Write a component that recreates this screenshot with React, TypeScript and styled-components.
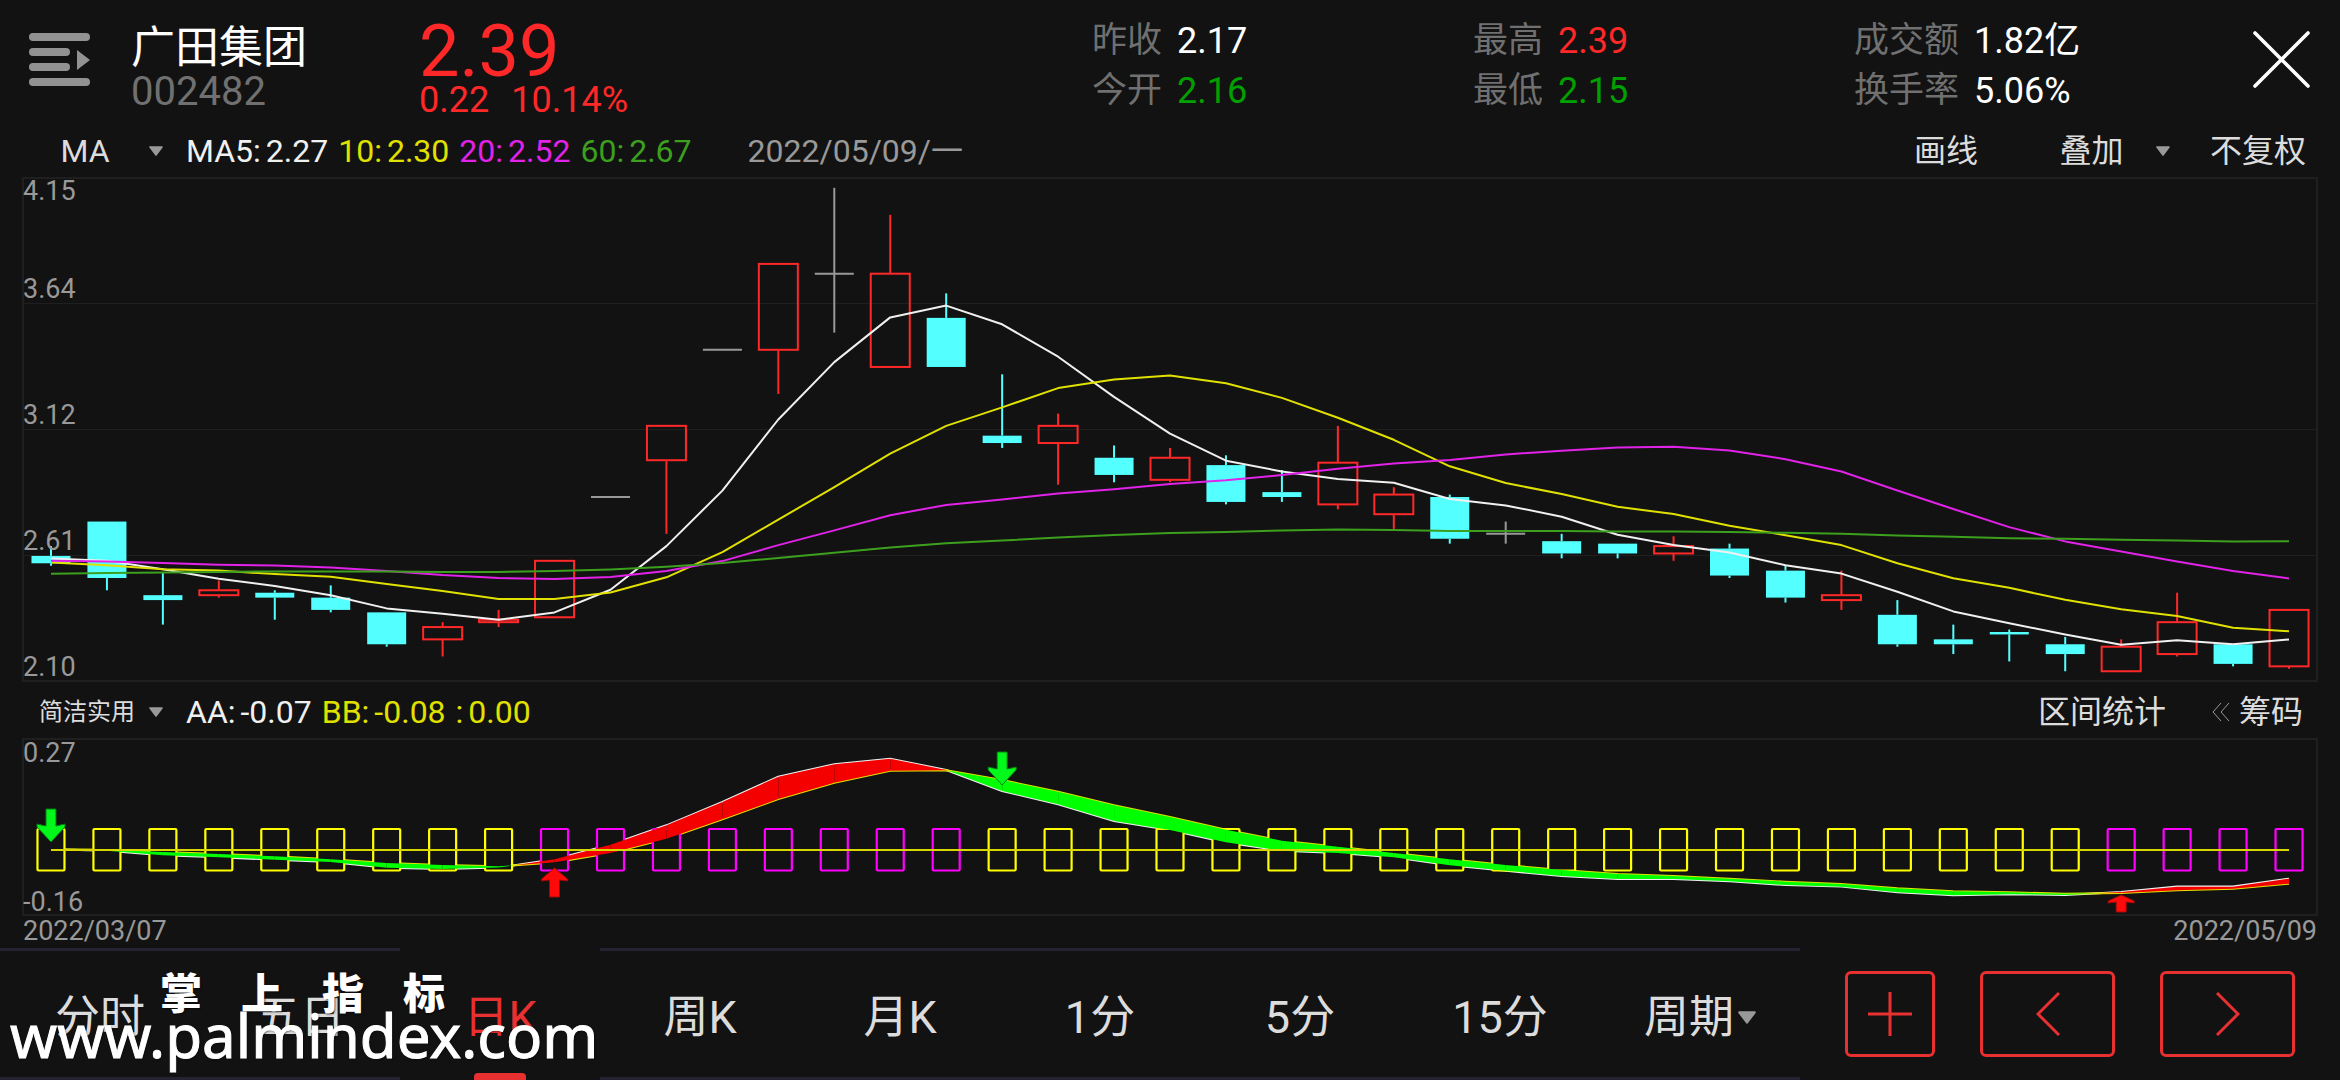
import React from "react";
import styled, { createGlobalStyle } from "styled-components";

const color = {
  bg: "#121212",
  red: "#ff2828",
  accent: "#e83030",
  green: "#00a000",
  cyan: "#54ffff",
  yellow: "#e1e100",
  magenta: "#e122e8",
  maGreen: "#3ca01e",
  light: "#dcdcdc",
  bright: "#f0f0f0",
  grey: "#999999",
  dim: "#707070",
  grid: "#1f1f1f",
  navLine: "#232333",
};

const GlobalStyle = createGlobalStyle`
  *, *::before, *::after { box-sizing: border-box; }
  body { margin: 0; background: ${color.bg}; }
  button, select {
    margin: 0; padding: 0; border: 0; background: none; color: inherit;
    font: inherit; cursor: pointer; appearance: none; border-radius: 0;
  }
  svg { display: block; }
`;

const Page = styled.div`
  position: relative;
  display: flex;
  flex-direction: column;
  min-height: 100vh;
  overflow: hidden;
  background: ${color.bg};
  color: ${color.light};
  font-family: Roboto, "Noto Sans CJK SC", sans-serif;
`;

/* ---------- header ---------- */

const Header = styled.header`
  display: flex;
  align-items: flex-start;
  height: 126px;
  padding: 0 30px 0 29px;
`;

const MenuButton = styled.button`
  margin-top: 33px;
  margin-right: 41px;
`;

const Identity = styled.div`
  width: 288px;
  padding-top: 26px;
  line-height: 44px;
`;

const StockName = styled.h1`
  margin: 0;
  color: #fff;
  font-size: 44px;
  font-weight: 400;
`;

const StockCode = styled.div`
  color: ${color.dim};
  font-size: 40px;
`;

const Quote = styled.div`
  flex: 1;
  padding-top: 20px;
  color: ${color.red};
`;

const LastPrice = styled.div`
  font-size: 72px;
  line-height: 64px;
`;

const Change = styled.div`
  display: flex;
  gap: 22px;
  font-size: 36px;
  line-height: 32px;
`;

const Stats = styled.dl`
  display: grid;
  grid-template-columns: repeat(3, 381px);
  grid-auto-flow: column;
  grid-template-rows: 50px 50px;
  margin: 0;
  padding-top: 16px;
  font-size: 36px;
  line-height: 50px;
`;

const Stat = styled.div`
  display: flex;
  gap: 15px;
`;

const StatLabel = styled.dt`
  color: ${color.dim};
  font-size: 35px;
`;

const StatValue = styled.dd<{ $color: string }>`
  margin: 0;
  color: ${(p) => p.$color};
`;

const CloseButton = styled.button`
  margin: 31px 0 0 18px;
`;

/* ---------- toolbars ---------- */

const Toolbar = styled.div<{ $height: number; $top?: number; $bottom?: number; $end: number }>`
  display: flex;
  align-items: center;
  height: ${(p) => p.$height}px;
  padding: ${(p) => p.$top ?? 0}px ${(p) => p.$end}px ${(p) => p.$bottom ?? 0}px 26px;
  font-size: 32px;
  line-height: 40px;
`;

const Picker = styled.label<{ $gap: number }>`
  display: flex;
  align-items: center;
  gap: ${(p) => p.$gap}px;
`;

const Select = styled.select<{ $size: number; $width?: number }>`
  width: ${(p) => (p.$width ? `${p.$width}px` : "auto")};
  font-size: ${(p) => p.$size}px;
  text-align: center;
  text-align-last: center;
  outline: none;
`;

const Readings = styled.div`
  display: flex;
  gap: 10px;
  margin-left: 23px;
`;

const Reading = styled.span<{ $color: string }>`
  display: flex;
  gap: 5px;
  color: ${(p) => p.$color};
`;

const DateLabel = styled.time`
  margin-left: 56px;
  color: ${color.grey};
`;

const Tools = styled.div`
  display: flex;
  align-items: center;
  margin-left: auto;
`;

const ToolButton = styled.button<{ $space?: number }>`
  display: flex;
  align-items: center;
  gap: 9px;
  margin-left: ${(p) => p.$space ?? 0}px;
  white-space: nowrap;
`;

const OverlaySlot = styled.div`
  margin: 0 40px 0 81px;
`;

/* ---------- charts ---------- */

const ChartFrame = styled.section<{ $height: number }>`
  display: grid;
  height: ${(p) => p.$height}px;
  margin: 0 23px;

  > * {
    grid-area: 1 / 1;
  }
`;

const Plot = styled.svg`
  width: 100%;
  height: 100%;
  overflow: visible;
`;

const Axis = styled.div<{ $bands: number }>`
  display: grid;
  grid-template-rows: repeat(${(p) => p.$bands}, 1fr);
  color: ${color.grey};
  font-size: 27px;
  line-height: 28px;
  pointer-events: none;
`;

const Band = styled.div`
  display: flex;
  flex-direction: column;
  justify-content: flex-end;

  &:first-child {
    justify-content: space-between;
  }
`;

const DateRange = styled.div`
  display: flex;
  justify-content: space-between;
  height: 32px;
  padding: 0 23px;
  color: ${color.grey};
  font-size: 27px;
  line-height: 30px;
`;

/* ---------- bottom navigation ---------- */

const Footer = styled.footer`
  display: flex;
  height: 132px;
`;

const Tabs = styled.nav`
  display: grid;
  flex: 1;
  grid-template-columns: repeat(9, 1fr);
`;

const Tab = styled.div<{ $active?: boolean }>`
  position: relative;
  display: flex;
  align-items: center;
  justify-content: center;
  padding-top: 7px;
  border: solid ${(p) => (p.$active ? "transparent" : color.navLine)};
  border-width: 3px 0;
  color: ${(p) => (p.$active ? color.accent : color.light)};
  font-size: 45px;
  line-height: 56px;
`;

const ActiveMark = styled.span`
  position: absolute;
  bottom: -3px;
  left: calc(50% - 26px);
  width: 52px;
  height: 7px;
  border-radius: 4px 4px 0 0;
  background: ${color.accent};
`;

const Actions = styled.div`
  display: flex;
  gap: 45px;
  padding: 23px 45px 0;
`;

const ActionButton = styled.button<{ $width: number }>`
  display: flex;
  align-items: center;
  justify-content: center;
  width: ${(p) => p.$width}px;
  height: 86px;
  border: 3px solid ${color.accent};
  border-radius: 6px;
`;

const Watermark = styled.div`
  position: absolute;
  bottom: 27px;
  left: 10px;
  color: #fff;
  pointer-events: none;
  text-shadow: 1px 1px 2px rgba(0, 0, 0, 0.6);
`;

const WatermarkName = styled.div`
  display: flex;
  gap: 39px;
  padding-left: 150px;
  font-size: 42px;
  font-weight: 900;
  line-height: 44px;
`;

const WatermarkSite = styled.div`
  font-family: "Noto Sans", sans-serif;
  font-size: 60px;
  line-height: 36px;
  -webkit-text-stroke: 1px #fff;
`;

/* ---------- data ---------- */

type Candle = [open: number, close: number, high: number, low: number];

const candles: Candle[] = [
  [2.61, 2.58, 2.65, 2.57], [2.75, 2.52, 2.75, 2.47], [2.45, 2.43, 2.54, 2.33],
  [2.45, 2.47, 2.51, 2.44], [2.46, 2.44, 2.47, 2.35], [2.44, 2.39, 2.49, 2.38],
  [2.38, 2.25, 2.38, 2.24], [2.27, 2.32, 2.34, 2.2], [2.34, 2.35, 2.39, 2.32],
  [2.36, 2.59, 2.59, 2.36], [2.85, 2.85, 2.85, 2.85], [3.0, 3.14, 3.14, 2.7],
  [3.45, 3.45, 3.45, 3.45], [3.45, 3.8, 3.8, 3.27], [3.76, 3.76, 4.11, 3.52],
  [3.38, 3.76, 4.0, 3.38], [3.58, 3.38, 3.68, 3.38], [3.1, 3.07, 3.35, 3.05],
  [3.07, 3.14, 3.19, 2.9], [3.01, 2.94, 3.06, 2.91], [2.92, 3.01, 3.05, 2.91],
  [2.98, 2.83, 3.02, 2.82], [2.87, 2.85, 2.96, 2.83], [2.82, 2.99, 3.14, 2.8],
  [2.78, 2.86, 2.89, 2.72], [2.85, 2.68, 2.86, 2.66], [2.7, 2.7, 2.75, 2.66],
  [2.67, 2.62, 2.7, 2.6], [2.66, 2.62, 2.66, 2.6], [2.62, 2.65, 2.69, 2.59],
  [2.64, 2.53, 2.66, 2.52], [2.55, 2.44, 2.57, 2.42], [2.43, 2.45, 2.55, 2.39],
  [2.37, 2.25, 2.43, 2.24], [2.27, 2.25, 2.33, 2.21], [2.3, 2.29, 2.31, 2.18],
  [2.25, 2.21, 2.28, 2.14], [2.14, 2.24, 2.27, 2.14], [2.21, 2.34, 2.46, 2.2],
  [2.25, 2.17, 2.25, 2.16], [2.16, 2.39, 2.39, 2.15],
];

/* Averages whose window starts before the first visible day are given as a lead-in. */
const movingAverage = (span: number, leadIn: number[]) =>
  candles.map((_, i) =>
    i < leadIn.length
      ? leadIn[i]
      : candles.slice(i - span + 1, i + 1).reduce((sum, c) => sum + c[1], 0) / span
  );

const ma5 = movingAverage(5, [2.6, 2.59, 2.556, 2.517]);
const ma10 = movingAverage(10, [2.583, 2.572, 2.556, 2.55, 2.536, 2.525, 2.495, 2.467, 2.434]);
const ma20 = movingAverage(20, [
  2.59, 2.587, 2.581, 2.574, 2.571, 2.563, 2.549, 2.532, 2.52, 2.516, 2.524, 2.548, 2.589, 2.654,
  2.714, 2.776, 2.818, 2.84, 2.864,
]);
const ma60 = [
  2.537, 2.54, 2.543, 2.545, 2.547, 2.547, 2.546, 2.545, 2.545, 2.548, 2.555, 2.566, 2.581, 2.602,
  2.623, 2.644, 2.662, 2.673, 2.685, 2.695, 2.703, 2.708, 2.714, 2.718, 2.715, 2.712, 2.711, 2.711,
  2.71, 2.71, 2.708, 2.704, 2.7, 2.693, 2.688, 2.682, 2.68, 2.676, 2.673, 2.669, 2.67,
];

/* Indicator values in ten-thousandths. */
const fast = [
  16, -16, -130, -179, -236, -293, -432, -465, -430, -228, 130, 603, 1174, 1793, 2095, 2233, 1956,
  1443, 1117, 709, 489, 187, -16, -73, -179, -375, -505, -636, -709, -709, -766, -856, -896, -1035,
  -1108, -1084, -1100, -1027, -896, -896, -701,
];
const slow = [
  16, 8, -49, -98, -155, -228, -318, -367, -399, -302, -73, 277, 750, 1247, 1646, 1940, 1948, 1711,
  1426, 1092, 807, 497, 228, 81, -73, -228, -367, -489, -587, -636, -701, -774, -831, -937, -1011,
  -1035, -1068, -1051, -986, -945, -823,
];

const isRising = (i: number) => (i >= 9 && i <= 16) || i >= 37;

/* ---------- plotting ---------- */

const W = 2294;
const PRICE_H = 504;
const IND_H = 177;
const STEP = W / candles.length;

const xAt = (i: number) => (i + 0.5) * STEP;
const priceY = (p: number) => 1 + (4.15 - p) * 245.4;
const indY = (v: number) => 111 - (v / 10000) * 409;

const toPoints = (values: number[], y: (v: number) => number) =>
  values.map((v, i) => `${xAt(i).toFixed(1)},${y(v).toFixed(1)}`).join(" ");

function CandleMark({ index, candle }: { index: number; candle: Candle }) {
  const [open, close, high, low] = candle;
  const x = xAt(index);
  const top = priceY(Math.max(open, close));
  const bottom = priceY(Math.min(open, close));
  const flat = open === close;
  const stroke = flat ? color.grey : close > open ? color.red : color.cyan;
  return (
    <g stroke={stroke} strokeWidth={2} fill="none">
      {priceY(high) < top && <line x1={x} x2={x} y1={priceY(high)} y2={top} />}
      {priceY(low) > bottom && <line x1={x} x2={x} y1={bottom} y2={priceY(low)} />}
      {flat && <line x1={x - 19.5} x2={x + 19.5} y1={top} y2={top} />}
      {close > open && <rect x={x - 19.5} y={top} width={39} height={bottom - top} />}
      {close < open && (
        <rect
          x={x - 19.5}
          y={top}
          width={39}
          height={bottom - top}
          fill={color.cyan}
          stroke="none"
        />
      )}
    </g>
  );
}

function PricePlot() {
  return (
    <Plot viewBox={`0 0 ${W} ${PRICE_H}`} preserveAspectRatio="none" role="img" aria-label="日K">
      <g stroke={color.grid} fill="none">
        <rect x={0} y={1} width={W} height={503} strokeWidth={2} />
        {[1, 2, 3].map((n) => (
          <line key={n} x1={0} x2={W} y1={0.5 + n * 126} y2={0.5 + n * 126} />
        ))}
      </g>
      {candles.map((c, i) => (
        <CandleMark key={i} index={i} candle={c} />
      ))}
      <g fill="none" strokeWidth={2} strokeLinejoin="round">
        <polyline points={toPoints(ma5, priceY)} stroke={color.bright} />
        <polyline points={toPoints(ma10, priceY)} stroke={color.yellow} />
        <polyline points={toPoints(ma20, priceY)} stroke={color.magenta} />
        <polyline points={toPoints(ma60, priceY)} stroke={color.maGreen} />
      </g>
    </Plot>
  );
}

/* Coloured area between the two lines; a step in which they cross is cut at the crossing. */
function Ribbon() {
  const areas: { points: string; up: boolean }[] = [];
  for (let i = 0; i < fast.length - 1; i++) {
    const d0 = fast[i] - slow[i];
    const d1 = fast[i + 1] - slow[i + 1];
    const x0 = xAt(i);
    const x1 = xAt(i + 1);
    if (d0 * d1 < 0) {
      const t = d0 / (d0 - d1);
      const cx = x0 + (x1 - x0) * t;
      const cy = indY(fast[i] + (fast[i + 1] - fast[i]) * t);
      areas.push({ points: `${x0},${indY(fast[i])} ${cx},${cy} ${x0},${indY(slow[i])}`, up: d0 > 0 });
      areas.push({
        points: `${x1},${indY(fast[i + 1])} ${cx},${cy} ${x1},${indY(slow[i + 1])}`,
        up: d1 > 0,
      });
    } else {
      areas.push({
        points: `${x0},${indY(fast[i])} ${x1},${indY(fast[i + 1])} ${x1},${indY(slow[i + 1])} ${x0},${indY(slow[i])}`,
        up: d0 + d1 > 0,
      });
    }
  }
  return (
    <g>
      {areas.map((a, i) => (
        <polygon key={i} points={a.points} fill={a.up ? "#f40000" : "#00ff00"} />
      ))}
    </g>
  );
}

function SellArrow({ index, y }: { index: number; y: number }) {
  return (
    <path
      transform={`translate(${xAt(index)} ${y})`}
      d="M-5 0H5V17L14 15V18L0 33L-14 18V15L-5 17Z"
      fill="#00f81a"
      stroke="#067a10"
      strokeWidth={1}
    />
  );
}

function BuyArrow({ index, y, height }: { index: number; y: number; height: number }) {
  const head = height > 20 ? 13 : 8;
  return (
    <path
      transform={`translate(${xAt(index)} ${y})`}
      d={`M0 0L13 ${head - 2}V${head}L5 ${head - 1}V${height}H-5V${head - 1}L-13 ${head}V${head - 2}Z`}
      fill="#ff0a0a"
      stroke="#a00808"
      strokeWidth={1}
    />
  );
}

function IndicatorPlot() {
  return (
    <Plot viewBox={`0 0 ${W} ${IND_H}`} preserveAspectRatio="none" role="img" aria-label="简洁实用">
      <rect x={0} y={0} width={W} height={176} stroke={color.grid} strokeWidth={2} fill="none" />
      <polyline points={toPoints(fast, indY)} stroke={color.bright} strokeWidth={2} fill="none" />
      <polyline points={toPoints(slow, indY)} stroke={color.yellow} strokeWidth={2} fill="none" />
      {fast.map((_, i) => (
        <rect
          key={i}
          x={xAt(i) - 13.5}
          y={90}
          width={27}
          height={41.5}
          rx={1}
          fill={color.bg}
          stroke={isRising(i) ? "#ff00ff" : "#ffff00"}
          strokeWidth={2.2}
        />
      ))}
      <Ribbon />
      <line x1={xAt(0)} x2={xAt(40)} y1={111} y2={111} stroke="#d8d800" strokeWidth={2} />
      <SellArrow index={0} y={70} />
      <SellArrow index={17} y={13} />
      <BuyArrow index={9} y={129} height={29} />
      <BuyArrow index={37} y={156} height={17} />
    </Plot>
  );
}

/* ---------- icons ---------- */

function Caret({ large }: { large?: boolean }) {
  return (
    <svg width={large ? 20 : 14} height={large ? 13 : 10} viewBox="0 0 14 10" aria-hidden="true">
      <path d="M1 1H13L7 9Z" fill={color.grey} stroke={color.grey} strokeWidth={1.6} strokeLinejoin="round" />
    </svg>
  );
}

function MenuIcon() {
  return (
    <svg width="61" height="54" viewBox="0 0 61 54" fill="#929292" aria-hidden="true">
      <rect width="61" height="8" rx="4" />
      <rect y="15" width="41" height="8" rx="4" />
      <rect y="30" width="41" height="8" rx="4" />
      <rect y="45" width="61" height="8" rx="4" />
      <path d="M48 17L61 27L48 37Z" />
    </svg>
  );
}

function CloseIcon() {
  return (
    <svg width="57" height="57" viewBox="0 0 57 57" stroke="#fff" strokeWidth="3.6" strokeLinecap="round" aria-hidden="true">
      <path d="M2 2L55 55M55 2L2 55" />
    </svg>
  );
}

function StrokeIcon({ path, width }: { path: string; width: number }) {
  return (
    <svg width={width} height="44" viewBox={`0 0 ${width} 44`} fill="none" stroke={color.accent} strokeWidth="3" aria-hidden="true">
      <path d={path} />
    </svg>
  );
}

/* ---------- page ---------- */

const stats = [
  { label: "昨收", value: "2.17", tone: "#fff" },
  { label: "今开", value: "2.16", tone: color.green },
  { label: "最高", value: "2.39", tone: color.red },
  { label: "最低", value: "2.15", tone: color.green },
  { label: "成交额", value: "1.82亿", tone: "#fff" },
  { label: "换手率", value: "5.06%", tone: "#fff" },
];

const averages = [
  { label: "MA5:", value: "2.27", tone: color.bright },
  { label: "10:", value: "2.30", tone: color.yellow },
  { label: "20:", value: "2.52", tone: color.magenta },
  { label: "60:", value: "2.67", tone: color.maGreen },
];

const indicators = [
  { label: "AA:", value: "-0.07", tone: color.bright },
  { label: "BB:", value: "-0.08", tone: color.yellow },
  { label: ":", value: "0.00", tone: color.yellow },
];

const periods = ["分时", "五日", "日K", "周K", "月K", "1分", "5分", "15分"];

function ReadingList({ items }: { items: typeof averages }) {
  return (
    <Readings>
      {items.map((r) => (
        <Reading key={r.label} $color={r.tone}>
          <span>{r.label}</span>
          <span>{r.value}</span>
        </Reading>
      ))}
    </Readings>
  );
}

export default function App() {
  return (
    <Page>
      <GlobalStyle />
      <Header>
        <MenuButton aria-label="菜单">
          <MenuIcon />
        </MenuButton>
        <Identity>
          <StockName>广田集团</StockName>
          <StockCode>002482</StockCode>
        </Identity>
        <Quote>
          <LastPrice>2.39</LastPrice>
          <Change>
            <span>0.22</span>
            <span>10.14%</span>
          </Change>
        </Quote>
        <Stats>
          {stats.map((s) => (
            <Stat key={s.label}>
              <StatLabel>{s.label}</StatLabel>
              <StatValue $color={s.tone}>{s.value}</StatValue>
            </Stat>
          ))}
        </Stats>
        <CloseButton aria-label="关闭">
          <CloseIcon />
        </CloseButton>
      </Header>

      <Toolbar $height={51} $bottom={2} $end={34}>
        <Picker $gap={5}>
          <Select $size={32} $width={118} aria-label="主图指标">
            <option>MA</option>
          </Select>
          <Caret />
        </Picker>
        <ReadingList items={averages} />
        <DateLabel dateTime="2022-05-09">2022/05/09/一</DateLabel>
        <Tools>
          <ToolButton>画线</ToolButton>
          <OverlaySlot>
            <Picker $gap={32}>
              <Select $size={32} aria-label="叠加">
                <option>叠加</option>
              </Select>
              <Caret />
            </Picker>
          </OverlaySlot>
          <ToolButton>不复权</ToolButton>
        </Tools>
      </Toolbar>

      <ChartFrame $height={PRICE_H}>
        <PricePlot />
        <Axis $bands={4}>
          <Band>
            <span>4.15</span>
            <span>3.64</span>
          </Band>
          <Band>3.12</Band>
          <Band>2.61</Band>
          <Band>2.10</Band>
        </Axis>
      </ChartFrame>

      <Toolbar $height={58} $top={4} $end={37}>
        <Picker $gap={1}>
          <Select $size={24} $width={122} aria-label="副图指标">
            <option>简洁实用</option>
          </Select>
          <Caret />
        </Picker>
        <ReadingList items={indicators} />
        <Tools>
          <ToolButton>区间统计</ToolButton>
          <ToolButton $space={46}>
            <svg width="18" height="20" viewBox="0 0 18 20" fill="none" stroke={color.grey} aria-hidden="true">
              <path d="M9 1L1 10L9 19M17 1L9 10L17 19" />
            </svg>
            筹码
          </ToolButton>
        </Tools>
      </Toolbar>

      <ChartFrame $height={IND_H}>
        <IndicatorPlot />
        <Axis $bands={1}>
          <Band>
            <span>0.27</span>
            <span>-0.16</span>
          </Band>
        </Axis>
      </ChartFrame>
      <DateRange>
        <time dateTime="2022-03-07">2022/03/07</time>
        <time dateTime="2022-05-09">2022/05/09</time>
      </DateRange>

      <Footer>
        <Tabs>
          {periods.map((p) => (
            <Tab key={p} as="button" $active={p === "日K"}>
              {p}
              {p === "日K" && <ActiveMark />}
            </Tab>
          ))}
          <Tab>
            <Picker $gap={2}>
              <Select $size={45} aria-label="周期">
                <option>周期</option>
              </Select>
              <Caret large />
            </Picker>
          </Tab>
        </Tabs>
        <Actions>
          <ActionButton $width={90} aria-label="放大">
            <StrokeIcon width={44} path="M22 0V44M0 22H44" />
          </ActionButton>
          <ActionButton $width={135} aria-label="上一个">
            <StrokeIcon width={24} path="M23 1L2 22L23 43" />
          </ActionButton>
          <ActionButton $width={135} aria-label="下一个">
            <StrokeIcon width={24} path="M1 1L22 22L1 43" />
          </ActionButton>
        </Actions>
      </Footer>

      <Watermark>
        <WatermarkName>
          <span>掌</span>
          <span>上</span>
          <span>指</span>
          <span>标</span>
        </WatermarkName>
        <WatermarkSite>www.palmindex.com</WatermarkSite>
      </Watermark>
    </Page>
  );
}
